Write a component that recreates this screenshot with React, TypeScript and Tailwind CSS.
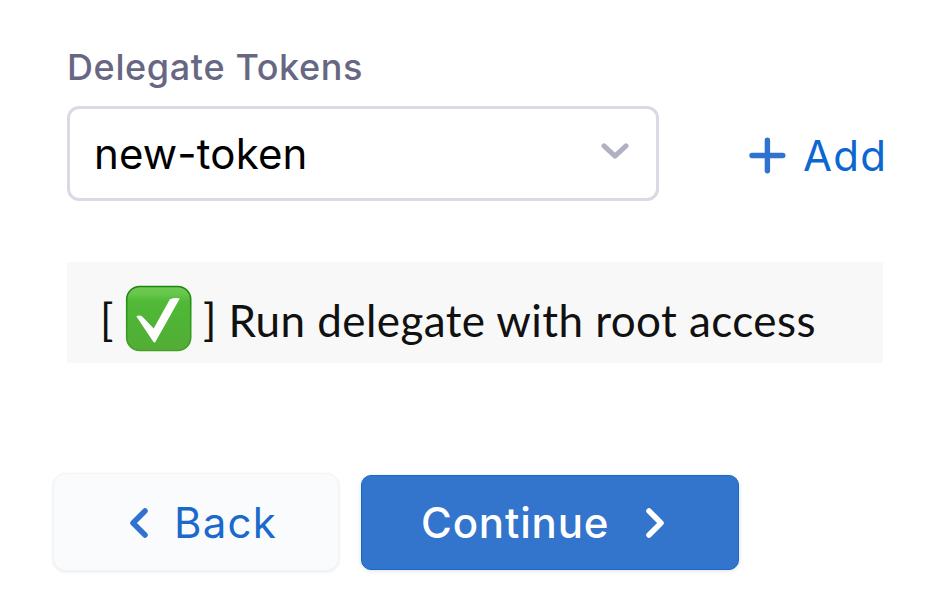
function CheckEmoji() {
  return (
    <svg className="ml-[14px] mt-[23px] h-[67px] w-[67px] shrink-0" viewBox="0 0 67 67" role="img" aria-label="Checked">
      <defs>
        <linearGradient id="face" x1="0" y1="0" x2="0" y2="1">
          <stop offset="0" stopColor="#6fca55" />
          <stop offset="0.12" stopColor="#66c64b" />
          <stop offset="0.24" stopColor="#50b936" />
          <stop offset="0.7" stopColor="#4fb236" />
          <stop offset="1" stopColor="#54ad34" />
        </linearGradient>
        <linearGradient id="edge" x1="0" y1="0" x2="0" y2="1">
          <stop offset="0" stopColor="#1d850b" />
          <stop offset="0.5" stopColor="#2f981c" />
          <stop offset="1" stopColor="#439f28" />
        </linearGradient>
      </defs>
      <rect x="1.7" y="1.5" width="64" height="64" rx="13" fill="url(#face)" stroke="url(#edge)" strokeWidth="1.6" />
      <path d="M11.3 31.2Q14.5 29.8 17.2 31.5L28.7 43.4L44.9 14.2Q49.5 12.4 54.8 13.4L30.2 57.2Q29.3 58.2 28.3 56.8Z" fill="white" />
    </svg>
  );
}

export default function App() {
  return (
    <main className="h-[600px] w-[934px] overflow-hidden bg-white pl-[53px] font-['Inter',sans-serif]">
      <section className="ml-[14px] pt-[47px]">
        <div className="h-10 text-[36px] leading-10 font-medium whitespace-nowrap text-[#676783]">
          <span className="tracking-[0.63px]">Delegate Tokens</span>
        </div>
        <div className="mt-[19px] flex">
          <div className="flex h-[95px] w-[592px] items-center justify-between rounded-[12px] border-[3px] border-[#d9dae5] pr-[27px] pl-[24px]">
            <span className="text-[42px] leading-[50px] tracking-[0.15px] text-black">new-token</span>
            <svg className="mb-[6px] h-[18px] w-[28px]" viewBox="0 0 28 18" fill="none" stroke="#b0b1c3" strokeWidth="5" strokeLinecap="round" strokeLinejoin="round">
              <path d="M3 3.9L14 14.1L25 3.9" />
            </svg>
          </div>
          <button className="ml-[89px] flex h-[95px] items-center pt-[5px] text-[#0c67d0]">
            <svg className="h-[38px] w-[38px]" viewBox="0 0 38 38" fill="none" stroke="#2f72d0" strokeWidth="5.4" strokeLinecap="round">
              <path d="M19.4 3.3V33.7M4 18.5H34.8" />
            </svg>
            <span className="ml-[17px] text-[42px] leading-[50px] tracking-[1.3px]">Add</span>
          </button>
        </div>
        <div className="mt-[61px] flex h-[101px] w-[816px] items-start bg-[#f8f8f8] font-['Lato',sans-serif] text-[44px] leading-[52px] whitespace-nowrap text-[#111111]">
          <span className="mt-[31px] ml-[33px] w-[11px]">[</span>
          <CheckEmoji />
          <span className="mt-[31px] ml-[11px]">]</span>
          <span className="mt-[32px] ml-[12px] tracking-[0.43px]">Run delegate with root access</span>
        </div>
      </section>
      <div className="mt-[110px] flex gap-[22px]">
        <button className="flex h-[98px] w-[286px] items-center rounded-[13px] border border-[#f3f4f6] bg-[#fafbfd] pt-[2px] pl-[75px] text-[#1a69cb] shadow-[0_1px_3px_rgba(40,41,61,0.1)]">
          <svg className="h-[32px] w-[20px]" viewBox="0 0 20 32" fill="none" stroke="#2f72d0" strokeWidth="5.5" strokeLinecap="round" strokeLinejoin="round">
            <path d="M16 4L4 16L16 28" />
          </svg>
          <span className="ml-[25px] text-[42px] leading-[50px] tracking-[1.2px]">Back</span>
        </button>
        <button className="mt-[2px] flex h-[95px] w-[378px] items-center rounded-[10px] border border-[#1568cc] bg-[#3375cd] pt-px pl-[59px] text-white shadow-[0_1px_4px_rgba(40,41,61,0.14)]">
          <span className="text-[42px] leading-[50px] font-medium tracking-[0.85px]">Continue</span>
          <svg className="ml-[36px] h-[32px] w-[20px]" viewBox="0 0 20 32" fill="none" stroke="white" strokeWidth="5.5" strokeLinecap="round" strokeLinejoin="round">
            <path d="M4 4L16 16L4 28" />
          </svg>
        </button>
      </div>
    </main>
  );
}
